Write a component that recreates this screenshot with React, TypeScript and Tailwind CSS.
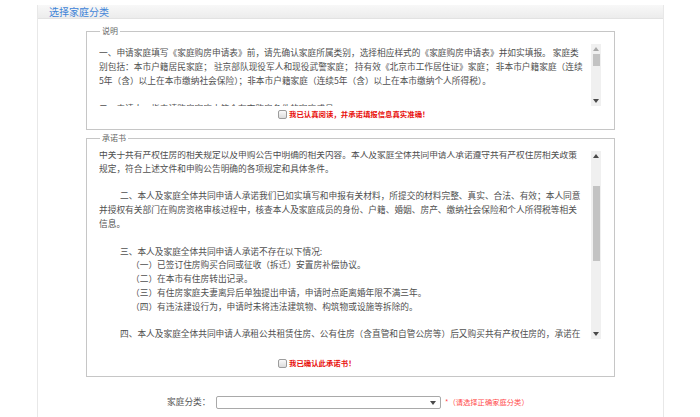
import React from 'react'

const font = { fontFamily: '"Noto Sans CJK SC", "Liberation Sans", sans-serif' }

const noticeLines = [
  '一、申请家庭填写《家庭购房申请表》前，请先确认家庭所属类别，选择相应样式的《家庭购房申请表》并如实填报。 家庭类',
  '别包括：本市户籍居民家庭； 驻京部队现役军人和现役武警家庭； 持有效《北京市工作居住证》家庭； 非本市户籍家庭（连续',
  '5年（含）以上在本市缴纳社会保险）；非本市户籍家庭（连续5年（含）以上在本市缴纳个人所得税）。',
  '',
  '二、申请人：指申请购房家庭中符合在京购房条件的家庭成员',
]

const promiseLines: { text: string; indent?: 'p' | 'item' }[] = [
  { text: '中关于共有产权住房的相关规定以及申购公告中明确的相关内容。本人及家庭全体共同申请人承诺遵守共有产权住房相关政策' },
  { text: '规定，符合上述文件和申购公告明确的各项规定和具体条件。' },
  { text: '' },
  { text: '二、本人及家庭全体共同申请人承诺我们已如实填写和申报有关材料，所提交的材料完整、真实、合法、有效；本人同意', indent: 'p' },
  { text: '并授权有关部门在购房资格审核过程中，核查本人及家庭成员的身份、户籍、婚姻、房产、缴纳社会保险和个人所得税等相关' },
  { text: '信息。' },
  { text: '' },
  { text: '三、本人及家庭全体共同申请人承诺不存在以下情况:', indent: 'p' },
  { text: '（一）已签订住房购买合同或征收（拆迁）安置房补偿协议。', indent: 'item' },
  { text: '（二）在本市有住房转出记录。', indent: 'item' },
  { text: '（三）有住房家庭夫妻离异后单独提出申请，申请时点距离婚年限不满三年。', indent: 'item' },
  { text: '（四）有违法建设行为，申请时未将违法建筑物、构筑物或设施等拆除的。', indent: 'item' },
  { text: '' },
  { text: '四、本人及家庭全体共同申请人承租公共租赁住房、公有住房（含直管和自管公房等）后又购买共有产权住房的，承诺在', indent: 'p' },
]

function Arrow({ up, light }: { up?: boolean; light?: boolean }) {
  return (
    <svg width="6" height="4" viewBox="0 0 6 4">
      <polygon points={up ? '0,4 6,4 3,0' : '0,0 6,0 3,4'} fill={light ? '#a8a8a8' : '#4a4a4a'} />
    </svg>
  )
}

function Scrollbar({ thumbTop, thumbHeight, upLight }: { thumbTop: string; thumbHeight: string; upLight?: boolean }) {
  return (
    <div className="flex w-[10px] shrink-0 flex-col bg-[#f0f0f0]">
      <div className="flex h-[10px] items-center justify-center">
        <Arrow up light={upLight} />
      </div>
      <div className="flex-1">
        <div className={`ml-[2px] w-[7px] bg-[#c3c3c3] ${thumbTop} ${thumbHeight}`} />
      </div>
      <div className="flex h-[10px] items-center justify-center">
        <Arrow />
      </div>
    </div>
  )
}

function Checkbox() {
  return (
    <span className="inline-block h-[9px] w-[9px] rounded-[2px] border border-[#9c9c9c] bg-gradient-to-b from-[#fafafa] to-[#dcdcdc]" />
  )
}

function Confirm({ label }: { label: string }) {
  return (
    <div className="ml-[179px] flex h-[12px] items-center gap-[2px]">
      <Checkbox />
      <span className="text-[7.4px] font-bold leading-none text-[#e8100c]">{label}</span>
    </div>
  )
}

function Legend({ label }: { label: string }) {
  return (
    <span className="absolute left-[13px] top-[-6px] bg-white px-[2px] text-[8px] leading-[10px] text-[#666]">
      {label}
    </span>
  )
}

export default function App() {
  return (
    <div className="h-[417px] w-[700px] overflow-hidden bg-white" style={font}>
      <div className="ml-[37px] mt-[5px] h-[412px] w-[627px] border-x border-[#e8e8e8]">
        <div className="flex h-[14px] items-center border-b border-[#e2e2e2] bg-gradient-to-b from-[#f8f8f8] to-[#ececec] pl-[11px]">
          <span className="text-[10px] leading-none text-[#3f84d8]">选择家庭分类</span>
        </div>

        <div className="relative ml-[48px] mt-[12px] h-[99px] w-[529px] border border-[#c6c6c6] pl-[12px] pt-[12px]">
          <Legend label="说明" />
          <div className="flex h-[62px] w-[502px]">
            <div className="flex-1 overflow-hidden text-[8.7px] leading-[14.2px] text-[#4f4f4f]">
              <div className="mt-[1.5px]">
                {noticeLines.map((l, i) => (
                  <div key={i} className="h-[14.2px] whitespace-nowrap">
                    {l}
                  </div>
                ))}
              </div>
            </div>
            <Scrollbar thumbTop="mt-0" thumbHeight="h-[12px]" upLight />
          </div>
          <div className="mt-[2px]">
            <Confirm label="我已认真阅读，并承诺填报信息真实准确！" />
          </div>
        </div>

        <div className="relative ml-[48px] mt-[8px] h-[239px] w-[529px] border border-[#c6c6c6] pl-[12px] pt-[12px]">
          <Legend label="承诺书" />
          <div className="flex h-[188px] w-[502px]">
            <div className="flex-1 overflow-hidden text-[8.7px] leading-[13.8px] text-[#4f4f4f]">
              <div className="mt-[-3px]">
                {promiseLines.map((l, i) => (
                  <div
                    key={i}
                    className={`h-[13.8px] whitespace-nowrap ${
                      l.indent === 'p' ? 'pl-[21px]' : l.indent === 'item' ? 'pl-[32px]' : ''
                    }`}
                  >
                    {l.text}
                  </div>
                ))}
              </div>
            </div>
            <Scrollbar thumbTop="mt-[25px]" thumbHeight="h-[75px]" />
          </div>
          <div className="mt-[18px]">
            <Confirm label="我已确认此承诺书！" />
          </div>
        </div>

        <div className="ml-[129px] mt-[19px] flex h-[13px] items-center">
          <span className="w-[49px] text-[8.7px] leading-none text-[#555]">家庭分类：</span>
          <div className="flex h-[13px] w-[225px] items-center justify-end rounded-[2px] border border-[#a9a9a9] bg-white pr-[4px]">
            <Arrow />
          </div>
          <span className="ml-[4px] text-[7.3px] leading-none text-[#ff4a4a]">*（请选择正确家庭分类）</span>
        </div>
      </div>
    </div>
  )
}
